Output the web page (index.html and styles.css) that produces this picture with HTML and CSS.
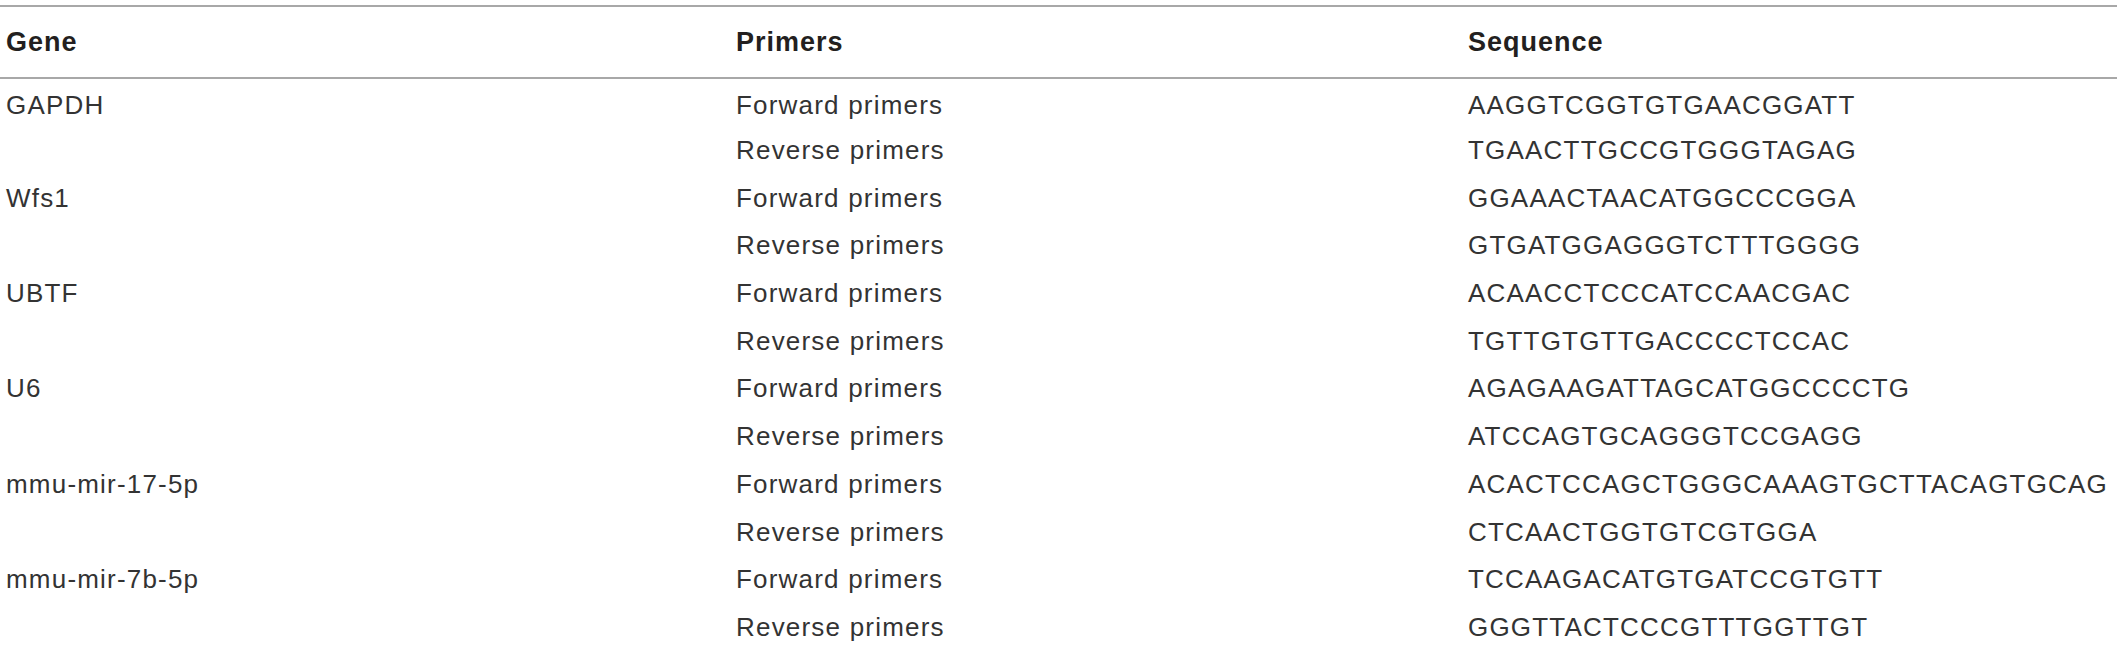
FILE: index.html
```html
<!DOCTYPE html>
<html lang="en">
<head>
<meta charset="utf-8">
<title>Primers</title>
<link rel="stylesheet" href="styles.css">
</head>
<body>
<table class="primer-table">
  <colgroup>
    <col class="col-gene">
    <col class="col-primers">
    <col class="col-seq">
  </colgroup>
  <thead>
    <tr>
      <th>Gene</th>
      <th>Primers</th>
      <th>Sequence</th>
    </tr>
  </thead>
  <tbody>
    <tr class="first"><td>GAPDH</td><td>Forward primers</td><td>AAGGTCGGTGTGAACGGATT</td></tr>
    <tr><td></td><td>Reverse primers</td><td>TGAACTTGCCGTGGGTAGAG</td></tr>
    <tr><td>Wfs1</td><td>Forward primers</td><td>GGAAACTAACATGGCCCGGA</td></tr>
    <tr><td></td><td>Reverse primers</td><td>GTGATGGAGGGTCTTTGGGG</td></tr>
    <tr><td>UBTF</td><td>Forward primers</td><td>ACAACCTCCCATCCAACGAC</td></tr>
    <tr><td></td><td>Reverse primers</td><td>TGTTGTGTTGACCCCTCCAC</td></tr>
    <tr><td>U6</td><td>Forward primers</td><td>AGAGAAGATTAGCATGGCCCCTG</td></tr>
    <tr><td></td><td>Reverse primers</td><td>ATCCAGTGCAGGGTCCGAGG</td></tr>
    <tr><td>mmu-mir-17-5p</td><td>Forward primers</td><td>ACACTCCAGCTGGGCAAAGTGCTTACAGTGCAG</td></tr>
    <tr><td></td><td>Reverse primers</td><td>CTCAACTGGTGTCGTGGA</td></tr>
    <tr><td>mmu-mir-7b-5p</td><td>Forward primers</td><td>TCCAAGACATGTGATCCGTGTT</td></tr>
    <tr><td></td><td>Reverse primers</td><td>GGGTTACTCCCGTTTGGTTGT</td></tr>
  </tbody>
</table>
</body>
</html>
```

FILE: styles.css
```css
html, body {
  margin: 0;
  padding: 0;
  background: #ffffff;
}

body {
  padding-top: 5px;
  font-family: "Liberation Sans", Arial, Helvetica, sans-serif;
  color: #231f20;
}

.primer-table {
  width: 100%;
  border-collapse: collapse;
  border-top: 2px solid #a8a8a8;
  table-layout: fixed;
  font-size: 26px;
  letter-spacing: 1.2px;
}

.col-gene { width: 730px; }
.col-primers { width: 732px; }

.primer-table th {
  height: 70px;
  padding: 0 0 0 6px;
  text-align: left;
  font-size: 27px;
  font-weight: bold;
  letter-spacing: 1px;
  color: #231f20;
  border-bottom: 2px solid #a8a8a8;
  vertical-align: middle;
}

.primer-table td {
  height: 47.7px;
  padding: 0 0 0 6px;
  vertical-align: middle;
  white-space: nowrap;
  color: #333333;
}

.primer-table tr.first td {
  padding-top: 6px;
  height: 41.7px;
}
```
